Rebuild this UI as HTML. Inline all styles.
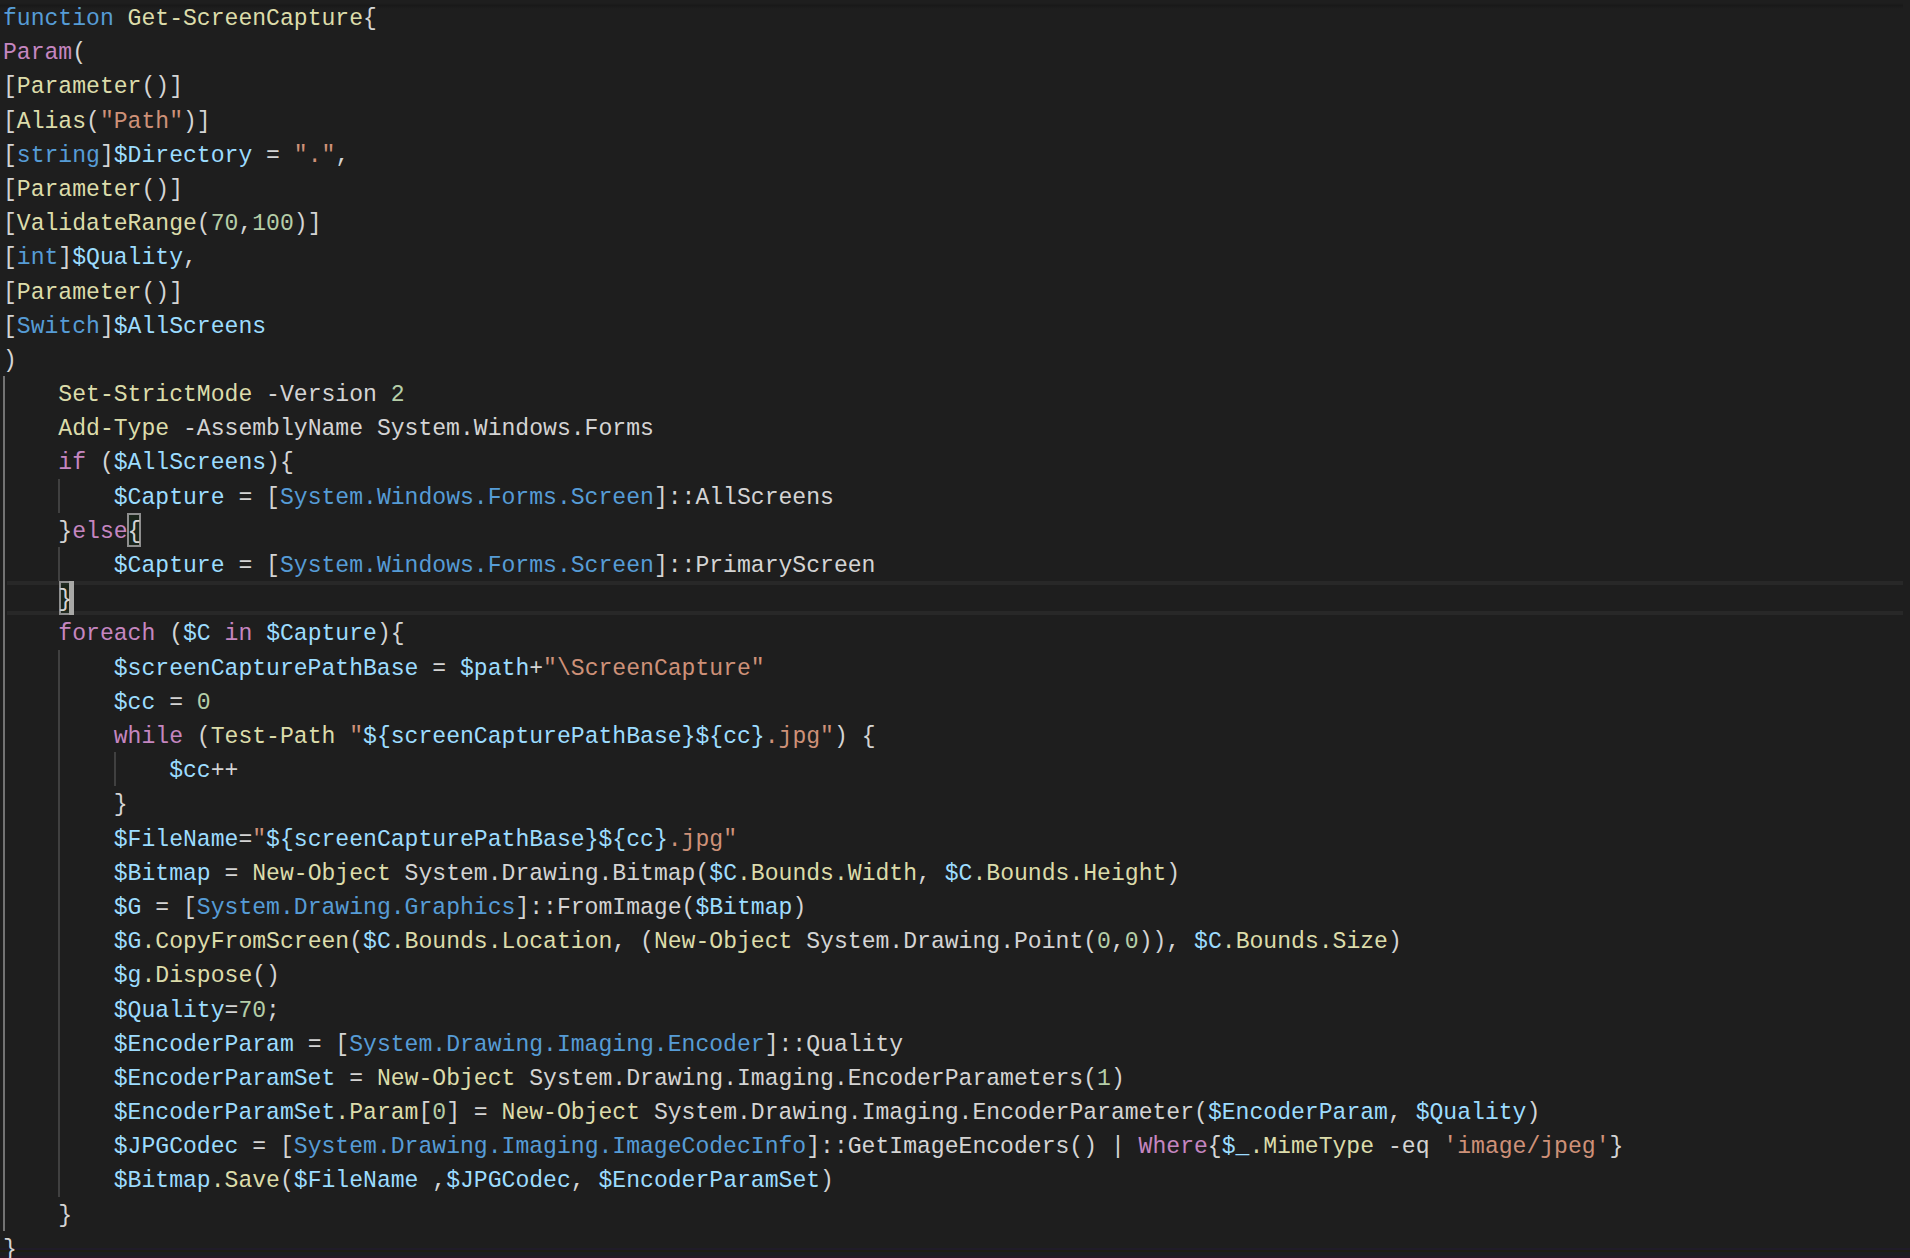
<!DOCTYPE html>
<html><head><meta charset="utf-8"><title>Get-ScreenCapture</title>
<style>
html,body{margin:0;padding:0;background:#1e1e1e;}
body{width:1910px;height:1258px;overflow:hidden;position:relative;font-family:"Liberation Mono",monospace;font-size:23.08px;color:#d4d4d4;}
.l{position:absolute;left:2.95px;height:34.19px;line-height:34.19px;white-space:pre;letter-spacing:0px;}
.b{color:#569cd6}.y{color:#dcdcaa}.p{color:#c586c0}.v{color:#9cdcfe}.s{color:#ce9178}.n{color:#b5cea8}
.g{position:absolute;width:2px;background:#404040}
.ga{background:#737373}
.hl{position:absolute;left:6.5px;width:1896.5px;top:581.23px;height:34.19px;box-sizing:border-box;border-top:4px solid #282828;border-bottom:4px solid #282828;}
.bm{position:absolute;box-sizing:border-box;border:2px solid #8e8e8e;background:rgba(0,100,0,0.1);width:14.15px;height:34.29px}
.cur{position:absolute;background:#a8a8a6;height:34.29px}
.sh{position:absolute;left:0;top:3px;width:1903px;height:5.5px;background:linear-gradient(to bottom,rgba(0,0,0,0),rgba(0,0,0,0.17) 42%,rgba(0,0,0,0));}
.bt{position:absolute;left:0;top:1248px;width:1910px;height:10px;background:linear-gradient(to bottom,#201c29 0,#201c29 2px,#1e1f11 2px,#1e1f11 4px,#1c1e1f 4px,#1c1e1f 8px,#251923 8px,#251923 10px)}
</style></head>
<body>
<div class="sh"></div>
<div class="hl"></div>
<div class="g ga" style="left:2.95px;top:376.09px;height:854.75px"></div>
<div class="g " style="left:58.35px;top:478.66px;height:34.19px"></div>
<div class="g " style="left:58.35px;top:547.04px;height:34.19px"></div>
<div class="g " style="left:58.35px;top:649.61px;height:547.04px"></div>
<div class="g " style="left:113.75px;top:752.18px;height:34.19px"></div>
<div class="bm" style="left:126.9px;top:512.95px;width:14.3px"></div>
<div class="bm" style="left:58.9px;top:581.03px;width:13.9px"></div>
<div class="cur" style="left:68.8px;top:581.03px;width:5.4px"></div>
<div class="bt"></div>
<div class="l" style="top:2.00px"><span class="b">function</span> <span class="y">Get-ScreenCapture</span>{</div>
<div class="l" style="top:36.19px"><span class="p">Param</span>(</div>
<div class="l" style="top:70.38px">[<span class="y">Parameter</span>()]</div>
<div class="l" style="top:104.57px">[<span class="y">Alias</span>(<span class="s">"Path"</span>)]</div>
<div class="l" style="top:138.76px">[<span class="b">string</span>]<span class="v">$Directory</span> = <span class="s">"."</span>,</div>
<div class="l" style="top:172.95px">[<span class="y">Parameter</span>()]</div>
<div class="l" style="top:207.14px">[<span class="y">ValidateRange</span>(<span class="n">70</span>,<span class="n">100</span>)]</div>
<div class="l" style="top:241.33px">[<span class="b">int</span>]<span class="v">$Quality</span>,</div>
<div class="l" style="top:275.52px">[<span class="y">Parameter</span>()]</div>
<div class="l" style="top:309.71px">[<span class="b">Switch</span>]<span class="v">$AllScreens</span></div>
<div class="l" style="top:343.90px">)</div>
<div class="l" style="top:378.09px">    <span class="y">Set-StrictMode</span> -Version <span class="n">2</span></div>
<div class="l" style="top:412.28px">    <span class="y">Add-Type</span> -AssemblyName System.Windows.Forms</div>
<div class="l" style="top:446.47px">    <span class="p">if</span> (<span class="v">$AllScreens</span>){</div>
<div class="l" style="top:480.66px">        <span class="v">$Capture</span> = [<span class="b">System.Windows.Forms.Screen</span>]::AllScreens</div>
<div class="l" style="top:514.85px">    }<span class="p">else</span>{</div>
<div class="l" style="top:549.04px">        <span class="v">$Capture</span> = [<span class="b">System.Windows.Forms.Screen</span>]::PrimaryScreen</div>
<div class="l" style="top:583.23px">    }</div>
<div class="l" style="top:617.42px">    <span class="p">foreach</span> (<span class="v">$C</span> <span class="p">in</span> <span class="v">$Capture</span>){</div>
<div class="l" style="top:651.61px">        <span class="v">$screenCapturePathBase</span> = <span class="v">$path</span>+<span class="s">"\ScreenCapture"</span></div>
<div class="l" style="top:685.80px">        <span class="v">$cc</span> = <span class="n">0</span></div>
<div class="l" style="top:719.99px">        <span class="p">while</span> (<span class="y">Test-Path</span> <span class="s">"</span><span class="v">${screenCapturePathBase}${cc}</span><span class="s">.jpg"</span>) {</div>
<div class="l" style="top:754.18px">            <span class="v">$cc</span>++</div>
<div class="l" style="top:788.37px">        }</div>
<div class="l" style="top:822.56px">        <span class="v">$FileName</span>=<span class="s">"</span><span class="v">${screenCapturePathBase}${cc}</span><span class="s">.jpg"</span></div>
<div class="l" style="top:856.75px">        <span class="v">$Bitmap</span> = <span class="y">New-Object</span> System.Drawing.Bitmap(<span class="v">$C</span><span class="y">.Bounds.Width</span>, <span class="v">$C</span><span class="y">.Bounds.Height</span>)</div>
<div class="l" style="top:890.94px">        <span class="v">$G</span> = [<span class="b">System.Drawing.Graphics</span>]::FromImage(<span class="v">$Bitmap</span>)</div>
<div class="l" style="top:925.13px">        <span class="v">$G</span><span class="y">.CopyFromScreen</span>(<span class="v">$C</span><span class="y">.Bounds.Location</span>, (<span class="y">New-Object</span> System.Drawing.Point(<span class="n">0</span>,<span class="n">0</span>)), <span class="v">$C</span><span class="y">.Bounds.Size</span>)</div>
<div class="l" style="top:959.32px">        <span class="v">$g</span><span class="y">.Dispose</span>()</div>
<div class="l" style="top:993.51px">        <span class="v">$Quality</span>=<span class="n">70</span>;</div>
<div class="l" style="top:1027.70px">        <span class="v">$EncoderParam</span> = [<span class="b">System.Drawing.Imaging.Encoder</span>]::Quality</div>
<div class="l" style="top:1061.89px">        <span class="v">$EncoderParamSet</span> = <span class="y">New-Object</span> System.Drawing.Imaging.EncoderParameters(<span class="n">1</span>)</div>
<div class="l" style="top:1096.08px">        <span class="v">$EncoderParamSet</span><span class="y">.Param</span>[<span class="n">0</span>] = <span class="y">New-Object</span> System.Drawing.Imaging.EncoderParameter(<span class="v">$EncoderParam</span>, <span class="v">$Quality</span>)</div>
<div class="l" style="top:1130.27px">        <span class="v">$JPGCodec</span> = [<span class="b">System.Drawing.Imaging.ImageCodecInfo</span>]::GetImageEncoders() | <span class="p">Where</span>{<span class="v">$_</span><span class="y">.MimeType</span> -eq <span class="s">'image/jpeg'</span>}</div>
<div class="l" style="top:1164.46px">        <span class="v">$Bitmap</span><span class="y">.Save</span>(<span class="v">$FileName</span> ,<span class="v">$JPGCodec</span>, <span class="v">$EncoderParamSet</span>)</div>
<div class="l" style="top:1198.65px">    }</div>
<div class="l" style="top:1232.84px">}</div>
</body></html>
